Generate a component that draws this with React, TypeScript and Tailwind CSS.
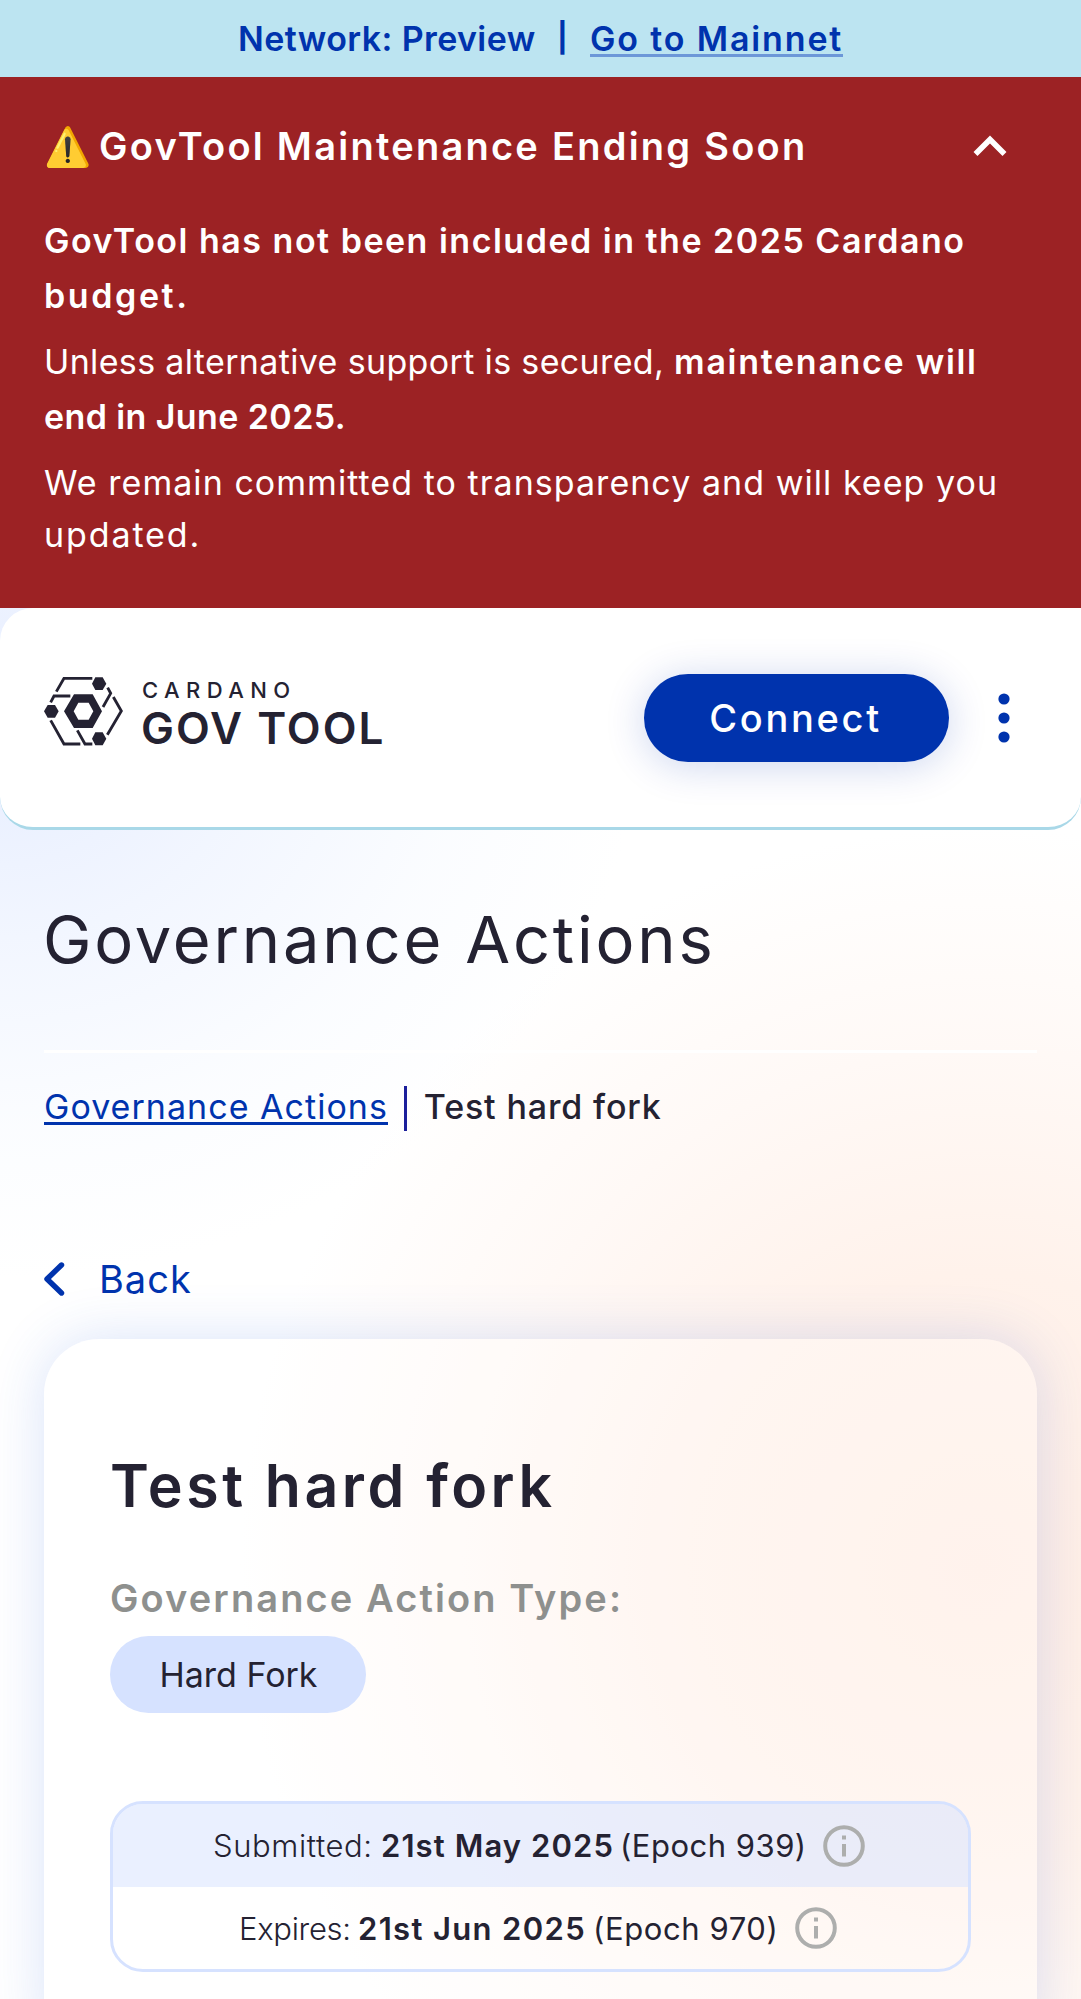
import type { ReactNode } from "react";

const NAVY = "#242232";

function Logo() {
  return (
    <svg className="mt-[3px] h-[69px] w-[79px] shrink-0" viewBox="42 50 237 207" fill={NAVY}>
      <g fill="none" stroke={NAVY} strokeWidth="8.5">
        <path d="M187 54H102L79 94" />
        <path d="M233 82L242 99L219 140" />
        <path d="M250 110L274 152L232 223" />
        <path d="M187 251H165L142 210" />
        <path d="M151 251H102L62 180" />
        <path d="M62 126L72 107H121" />
      </g>
      <path d="M186 70L196 51H218L229 70L218 89H196Z" />
      <path d="M186 235L196 216H218L229 235L218 255H196Z" />
      <path d="M42 153L53 134H75L86 153L75 172H53Z" />
      <path
        fillRule="evenodd"
        d="M102 153L132 102H188L216 153L188 203H132ZM131 153L145 178H176L190 153L176 127H145Z"
      />
    </svg>
  );
}

function InfoIcon({ className }: { className: string }) {
  return (
    <svg className={className} viewBox="0 0 42 42" fill="none">
      <circle cx="21" cy="21" r="18.8" stroke="#ADAEAD" strokeWidth="4" />
      <rect x="19" y="10.5" width="4" height="4" fill="#ADAEAD" />
      <rect x="19" y="19" width="4" height="12.5" fill="#ADAEAD" />
    </svg>
  );
}

function Strong({ children }: { children: ReactNode }) {
  return <b className="font-semibold">{children}</b>;
}

export default function App() {
  return (
    <div className="h-[1999px] w-[1081px] overflow-hidden bg-white font-['Inter',sans-serif] text-[#242232]">
      <div className="flex h-[77px] items-center bg-[#BCE4F1] pb-[1px] pl-[238px] text-[34px] font-semibold text-[#0033AD] whitespace-nowrap">
        <span className="w-[319px] tracking-[0.4px]">Network: Preview</span>
        <span className="w-[33px] text-[29px] font-bold">|</span>
        <a className="relative tracking-[1.85px]">
          Go to Mainnet
          <span className="absolute right-0 bottom-[7px] left-0 h-[3px] bg-[#6C97D8]" />
        </a>
      </div>

      <section className="h-[531px] bg-[#9C2224] px-[44px] pt-[40px] text-[34px] text-white whitespace-nowrap">
        <div className="flex h-[58px] items-center text-[38px] font-semibold">
          <span className="w-[55px] text-[38px]">⚠️</span>
          <span className="tracking-[2.25px]">GovTool Maintenance Ending Soon</span>
          <svg className="ml-auto mr-[30px] h-[22px] w-[34px]" viewBox="0 0 34 22" fill="none">
            <path d="M2.5 19L17 4.5L31.5 19" stroke="white" strokeWidth="5.6" />
          </svg>
        </div>
        <p className="mt-[39px] leading-[54.5px]">
          <Strong>
            <span className="tracking-[1.5px]">GovTool has not been included in the 2025 Cardano</span>
            <br />
            <span className="tracking-[2.6px]">budget.</span>
          </Strong>
        </p>
        <p className="mt-[12px] leading-[54.5px]">
          <span className="tracking-[0.35px]">Unless alternative support is secured, </span>
          <Strong>
            <span className="tracking-[1.7px]">maintenance will</span>
            <br />
            <span className="tracking-[0.4px]">end in June 2025.</span>
          </Strong>
        </p>
        <p className="mt-[13px] leading-[52px]">
          <span className="tracking-[1.04px]">We remain committed to transparency and will keep you</span>
          <br />
          <span className="tracking-[1.9px]">updated.</span>
        </p>
      </section>

      <div className="min-h-[1391px] bg-[radial-gradient(ellipse_640px_560px_at_0px_110px,#E6EDFF_0%,#EFF4FFcc_40%,#F7FAFF88_72%,transparent_100%),radial-gradient(ellipse_740px_740px_at_980px_960px,#FFEDE4_0%,#FFF2EB_40%,#FFF9F6_70%,transparent_100%)]">
        <header className="flex h-[222px] items-start rounded-[33px] border-b-3 border-[#A9D8E8] bg-white px-[44px] pt-[66px]">
          <Logo />
          <div className="mt-[5px] ml-[19px] whitespace-nowrap">
            <div className="text-[22px] leading-[22px] font-medium tracking-[6.4px]">CARDANO</div>
            <div className="-ml-px mt-[5px] text-[44px] leading-[44px] font-semibold tracking-[2px]">GOV TOOL</div>
          </div>
          <button className="ml-auto flex h-[88px] w-[305px] items-center justify-center rounded-full bg-[#0033AD] pr-[2px] text-[38px] font-medium tracking-[2.7px] text-white shadow-[0_4px_40px_rgba(0,51,173,0.2)]">
            Connect
          </button>
          <svg className="mt-[19px] mr-[27px] ml-[49px] h-[50px] w-[12px]" viewBox="0 0 12 50" fill="#0033AD">
            <circle cx="6" cy="6" r="5.6" />
            <circle cx="6" cy="25" r="5.6" />
            <circle cx="6" cy="44" r="5.6" />
          </svg>
        </header>

        <main className="px-[44px] whitespace-nowrap">
          <h1 className="mt-[70px] -ml-[1px] h-[80px] text-[65px] leading-[80px] font-normal tracking-[2.8px]">
            Governance Actions
          </h1>
          <div className="mt-[70px] h-[3px] bg-white" />
          <nav className="mt-[33px] flex h-[45px] items-center text-[34px]">
            <a className="relative -mt-[4px] w-[344px] tracking-[1.03px] text-[#0033AD]">
              Governance Actions
              <span className="absolute right-0 bottom-[7px] left-0 h-[3px] bg-[#0033AD]" />
            </a>
            <span className="ml-[16px] h-[45px] w-[2.75px] bg-[#1B1F9B]" />
            <span className="-mt-[4px] ml-[17px] font-medium tracking-[0.85px]">Test hard fork</span>
          </nav>
          <div className="mt-[124px] flex h-[48px] items-center text-[38px] text-[#0033AD]">
            <svg className="-ml-px h-[34px] w-[22px]" viewBox="0 0 22 34" fill="none">
              <path d="M18.5 3L4 17L18.5 31" stroke="#0033AD" strokeWidth="5.4" strokeLinecap="round" strokeLinejoin="round" />
            </svg>
            <span className="ml-[34px] tracking-[1px]">Back</span>
          </div>

          <article className="mt-[36px] h-[720px] rounded-[55px] bg-white/30 px-[66px] pt-[112px] shadow-[0_0_55px_rgba(47,98,220,0.18)]">
            <h2 className="h-[70px] text-[59px] leading-[70px] font-semibold tracking-[3.5px]">Test hard fork</h2>
            <div className="mt-[53px] h-[48px] text-[38px] leading-[48px] font-semibold tracking-[2.1px] text-[#8E908E]">
              Governance Action Type:
            </div>
            <div className="mt-[14px] flex h-[77px] w-[256px] items-center justify-center rounded-full bg-[#D6E2FF] pb-[1px] pl-[1px] text-[34px]">
              Hard Fork
            </div>
            <div className="mt-[88px] h-[171px] overflow-hidden rounded-[33px] border-3 border-[#D6E2FF] text-[31px]">
              <div className="flex h-[83px] items-center bg-[#D6E2FF]/50 pl-[100px]">
                <span className="mt-[2px] w-[168px] font-light tracking-[0.6px]">Submitted:</span>
                <span className="mt-[2px] w-[239px] font-semibold tracking-[1.1px]">21st May 2025</span>
                <span className="mt-[2px] w-[203px] tracking-[0.5px]">(Epoch 939)</span>
                <InfoIcon className="size-[42px]" />
              </div>
              <div className="flex h-[82px] items-center pl-[126px]">
                <span className="mt-[2px] w-[119px] font-light tracking-[-0.3px]">Expires:</span>
                <span className="mt-[2px] w-[235px] font-semibold tracking-[1.35px]">21st Jun 2025</span>
                <span className="mt-[2px] w-[202px] tracking-[0.6px]">(Epoch 970)</span>
                <InfoIcon className="size-[42px]" />
              </div>
            </div>
          </article>
        </main>
      </div>
    </div>
  );
}
